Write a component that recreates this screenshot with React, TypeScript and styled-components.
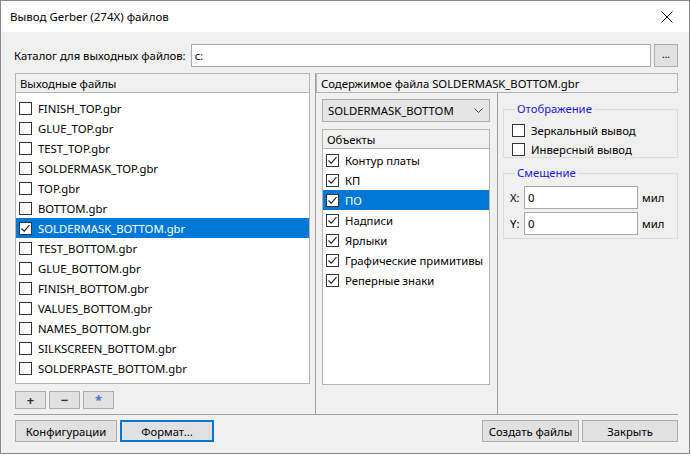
import React from 'react'
import styled, { createGlobalStyle } from 'styled-components'

const GlobalStyle = createGlobalStyle`
  html, body {
    margin: 0;
    padding: 0;
    background: #ffffff;
  }
  * {
    box-sizing: border-box;
  }
`

const Window = styled.div`
  width: 690px;
  height: 454px;
  border: 1px solid #8a8a8a;
  display: flex;
  flex-direction: column;
  font-family: 'Noto Sans', 'Liberation Sans', sans-serif;
  font-size: 11.3px;
  color: #000;
  background: #f0f0f0;
`

const TitleBar = styled.div`
  height: 31px;
  background: #ffffff;
  display: flex;
  align-items: center;
  justify-content: space-between;
  padding: 0 16px 0 9px;
  font-size: 11.5px;
`

const Client = styled.div`
  flex: 1;
  display: flex;
  flex-direction: column;
  padding: 12px 11px 0 13px;
`

const PathRow = styled.div`
  display: flex;
  align-items: center;
  height: 22px;
`

const Label = styled.span`
  margin-right: 5px;
  white-space: nowrap;
`

const TextInput = styled.div<{ $w?: number }>`
  height: 23px;
  ${({ $w }) => ($w ? `width: ${$w}px;` : 'flex: 1;')}
  background: #fff;
  border: 1px solid #a9a9a9;
  display: flex;
  align-items: center;
  padding-left: 3px;
`

const SmallButton = styled.div`
  width: 24px;
  height: 23px;
  margin-left: 3px;
  background: #e1e1e1;
  border: 1px solid #adadad;
  display: flex;
  align-items: center;
  justify-content: center;
  font-size: 10px;
  padding-bottom: 3px;
`

const Main = styled.div`
  display: flex;
  margin-top: 7px;
  height: 342px;
  border-bottom: 1px solid #a0a0a0;
`

const LeftPane = styled.div`
  width: 302px;
  display: flex;
  flex-direction: column;
  padding-left: 1px;
  border-right: 1px solid #a0a0a0;
`

const Header = styled.div<{ $mr?: number }>`
  height: 20px;
  border: 1px solid #b4b4b4;
  margin-right: ${({ $mr }) => $mr ?? 0}px;
  display: flex;
  align-items: center;
  padding-left: 4px;
  white-space: nowrap;
`

const List = styled.div<{ $mr?: number; $pt: number }>`
  flex: 1;
  background: #fff;
  border: 1px solid #b4b4b4;
  border-top: none;
  margin-right: ${({ $mr }) => $mr ?? 0}px;
  padding-top: ${({ $pt }) => $pt}px;
`

const Row = styled.div<{ $selected?: boolean }>`
  height: 20px;
  display: flex;
  align-items: center;
  padding-left: 3px;
  background: ${({ $selected }) => ($selected ? '#0078d7' : 'transparent')};
  color: ${({ $selected }) => ($selected ? '#fff' : '#000')};
  white-space: nowrap;
`

const Box = styled.div`
  width: 13px;
  height: 13px;
  border: 1px solid #333;
  background: #fff;
  margin-right: 6px;
  flex: none;
  display: flex;
  align-items: center;
  justify-content: center;
`

const ToolRow = styled.div`
  display: flex;
  gap: 3px;
  margin: 7px 0 5px 0;
`

const ToolButton = styled.div<{ $blue?: boolean }>`
  width: 31px;
  height: 18px;
  background: #e1e1e1;
  border: 1px solid #adadad;
  display: flex;
  align-items: center;
  justify-content: center;
  font-weight: bold;
  font-size: 13px;
  color: ${({ $blue }) => ($blue ? '#4a74d8' : '#333')};
`

const RightPane = styled.div`
  flex: 1;
  display: flex;
  flex-direction: column;
`

const Columns = styled.div`
  flex: 1;
  display: flex;
`

const MidColumn = styled.div`
  width: 182px;
  border-right: 1px solid #a0a0a0;
  padding: 6px 7px 29px 6px;
  display: flex;
  flex-direction: column;
`

const Combo = styled.div`
  height: 23px;
  background: #e5e5e5;
  border: 1px solid #adadad;
  display: flex;
  align-items: center;
  justify-content: space-between;
  padding: 0 6px 0 5px;
  margin-bottom: 7px;
`

const SideColumn = styled.div`
  flex: 1;
  padding: 10px 0 0 5px;
  display: flex;
  flex-direction: column;
  gap: 9px;
`

const Group = styled.fieldset<{ $h: number; $pt: number }>`
  margin: 0;
  height: ${({ $h }) => $h}px;
  border: 1px solid #dcdcdc;
  padding: ${({ $pt }) => $pt}px 0 0 8px;
`

const Legend = styled.legend`
  color: #1a1adc;
  padding: 0 2px;
  margin-left: 3px;
  line-height: 12px;
`

const GroupRow = styled.div`
  display: flex;
  align-items: center;
  height: 19px;
`

const OffsetRow = styled.div`
  display: flex;
  align-items: center;
  height: 26px;
  margin-left: -2px;
`

const AxisLabel = styled.span`
  width: 14px;
`

const Unit = styled.span`
  margin-left: 4px;
`

const BottomRow = styled.div`
  display: flex;
  align-items: center;
  padding: 5px 0 0 1px;
  gap: 3px;
`

const Button = styled.div<{ $w: number; $focus?: boolean }>`
  width: ${({ $w }) => $w}px;
  height: 22px;
  background: #e1e1e1;
  border: ${({ $focus }) => ($focus ? '2px solid #0078d7' : '1px solid #adadad')};
  display: flex;
  align-items: center;
  justify-content: center;
  white-space: nowrap;
`

const Spacer = styled.div`
  flex: 1;
`

const Check = () => (
  <svg width="11" height="11" viewBox="0 0 11 11">
    <path d="M1.5 5.5 L4.2 8.2 L9.5 2.2" fill="none" stroke="#222" strokeWidth="1.1" />
  </svg>
)

const CheckBox = ({ checked }: { checked?: boolean }) => <Box>{checked && <Check />}</Box>

const files = [
  'FINISH_TOP.gbr',
  'GLUE_TOP.gbr',
  'TEST_TOP.gbr',
  'SOLDERMASK_TOP.gbr',
  'TOP.gbr',
  'BOTTOM.gbr',
  'SOLDERMASK_BOTTOM.gbr',
  'TEST_BOTTOM.gbr',
  'GLUE_BOTTOM.gbr',
  'FINISH_BOTTOM.gbr',
  'VALUES_BOTTOM.gbr',
  'NAMES_BOTTOM.gbr',
  'SILKSCREEN_BOTTOM.gbr',
  'SOLDERPASTE_BOTTOM.gbr',
]

const objects = [
  'Контур платы',
  'КП',
  'ПО',
  'Надписи',
  'Ярлыки',
  'Графические примитивы',
  'Реперные знаки',
]

export default function App() {
  return (
    <>
      <GlobalStyle />
      <Window>
        <TitleBar>
          <span>Вывод Gerber (274X) файлов</span>
          <svg width="12" height="12" viewBox="0 0 12 12">
            <path d="M0.5 0.5 L11.5 11.5 M11.5 0.5 L0.5 11.5" stroke="#111" strokeWidth="1" />
          </svg>
        </TitleBar>
        <Client>
          <PathRow>
            <Label>Каталог для выходных файлов:</Label>
            <TextInput>c:</TextInput>
            <SmallButton>...</SmallButton>
          </PathRow>
          <Main>
            <LeftPane>
              <Header $mr={5}>Выходные файлы</Header>
              <List $mr={5} $pt={5}>
                {files.map((f, i) => (
                  <Row key={f} $selected={i === 6}>
                    <CheckBox checked={i === 6} />
                    {f}
                  </Row>
                ))}
              </List>
              <ToolRow>
                <ToolButton>+</ToolButton>
                <ToolButton>−</ToolButton>
                <ToolButton $blue>*</ToolButton>
              </ToolRow>
            </LeftPane>
            <RightPane>
              <Header>Содержимое файла SOLDERMASK_BOTTOM.gbr</Header>
              <Columns>
                <MidColumn>
                  <Combo>
                    <span>SOLDERMASK_BOTTOM</span>
                    <svg width="9" height="6" viewBox="0 0 9 6">
                      <path d="M0.5 0.5 L4.5 4.5 L8.5 0.5" fill="none" stroke="#444" strokeWidth="1" />
                    </svg>
                  </Combo>
                  <Header>Объекты</Header>
                  <List $pt={1}>
                    {objects.map((o, i) => (
                      <Row key={o} $selected={i === 2}>
                        <CheckBox checked />
                        {o}
                      </Row>
                    ))}
                  </List>
                </MidColumn>
                <SideColumn>
                  <Group $h={55} $pt={6}>
                    <Legend>Отображение</Legend>
                    <GroupRow>
                      <CheckBox />
                      Зеркальный вывод
                    </GroupRow>
                    <GroupRow>
                      <CheckBox />
                      Инверсный вывод
                    </GroupRow>
                  </Group>
                  <Group $h={72} $pt={5}>
                    <Legend>Смещение</Legend>
                    <OffsetRow>
                      <AxisLabel>X:</AxisLabel>
                      <TextInput $w={114}>0</TextInput>
                      <Unit>мил</Unit>
                    </OffsetRow>
                    <OffsetRow>
                      <AxisLabel>Y:</AxisLabel>
                      <TextInput $w={114}>0</TextInput>
                      <Unit>мил</Unit>
                    </OffsetRow>
                  </Group>
                </SideColumn>
              </Columns>
            </RightPane>
          </Main>
          <BottomRow>
            <Button $w={102}>Конфигурации</Button>
            <Button $w={94} $focus>
              Формат...
            </Button>
            <Spacer />
            <Button $w={97}>Создать файлы</Button>
            <Button $w={96}>Закрыть</Button>
          </BottomRow>
        </Client>
      </Window>
    </>
  )
}
